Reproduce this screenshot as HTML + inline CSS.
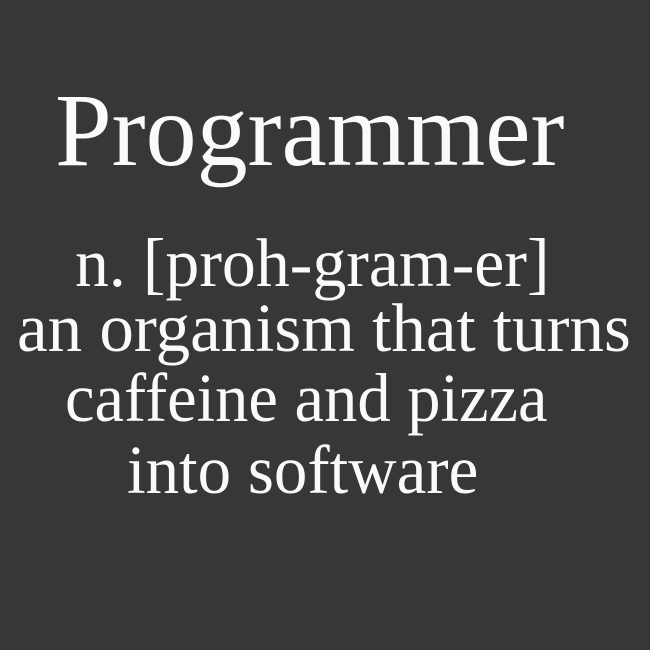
<!DOCTYPE html>
<html><head><style>
html,body{margin:0;padding:0}
body{width:650px;height:650px;background:#373737;position:relative;overflow:hidden;font-family:"Liberation Serif",serif;color:#fafafa}
div{position:absolute;white-space:nowrap;line-height:1;transform-origin:left}
.t{font-size:104px;left:55px;top:79px;transform:scaleX(0.98)}
.l{font-size:69px}
</style></head><body>
<div class="t">Programmer</div>
<div class="l" style="left:75px;top:229px;transform:scaleX(0.983)">n. [proh-gram-er]</div>
<div class="l" style="left:17px;top:294px">an organism that turns</div>
<div class="l" style="left:65px;top:364px;transform:scaleX(0.964)">caffeine and pizza</div>
<div class="l" style="left:127px;top:436px;transform:scaleX(0.97)">into software</div>
</body></html>
